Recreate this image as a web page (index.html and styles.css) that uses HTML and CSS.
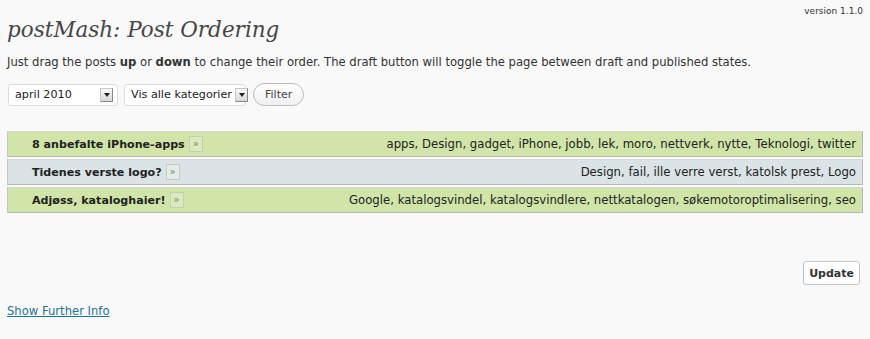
FILE: index.html
```html
<!DOCTYPE html>
<html>
<head>
    <link rel="stylesheet" href="styles.css">
</head>
<body>
    <div class="wrap">
        <div class="version">version 1.1.0</div>
        <h2>postMash: Post Ordering</h2>
        <p class="intro">Just drag the posts <strong>up</strong> or <strong>down</strong> to change their order. The draft button will toggle the page between draft and published states.</p>

        <div class="filters">
            <div class="select month">
                <span>april 2010</span>
                <span class="arrow"></span>
            </div>
            <div class="select cats">
                <span>Vis alle kategorier</span>
                <span class="arrow"></span>
            </div>
            <button class="filter-btn">Filter</button>
        </div>

        <ul class="posts">
            <li class="post green">
                <span class="title">8 anbefalte iPhone-apps</span>
                <span class="more">&raquo;</span>
                <span class="tags">apps, Design, gadget, iPhone, jobb, lek, moro, nettverk, nytte, Teknologi, twitter</span>
            </li>
            <li class="post blue">
                <span class="title">Tidenes verste logo?</span>
                <span class="more">&raquo;</span>
                <span class="tags">Design, fail, ille verre verst, katolsk prest, Logo</span>
            </li>
            <li class="post green">
                <span class="title">Adjøss, kataloghaier!</span>
                <span class="more">&raquo;</span>
                <span class="tags">Google, katalogsvindel, katalogsvindlere, nettkatalogen, søkemotoroptimalisering, seo</span>
            </li>
        </ul>

        <div class="actions">
            <button class="update-btn">Update</button>
        </div>

        <a href="#" class="further">Show Further Info</a>
    </div>
</body>
</html>
```

FILE: styles.css
```css
* {
    margin: 0;
    padding: 0;
    box-sizing: border-box;
}

body {
    background: #f9f9f9;
    font-family: 'DejaVu Sans', 'Liberation Sans', sans-serif;
    font-size: 11.6px;
    color: #333;
}

.wrap {
    position: relative;
    padding: 0 7px;
}

.version {
    position: absolute;
    top: 6px;
    right: 7px;
    font-size: 9px;
    color: #333;
}

h2 {
    font-family: 'DejaVu Serif', Georgia, serif;
    font-style: italic;
    font-weight: normal;
    font-size: 21.5px;
    color: #464646;
    padding-top: 15px;
    line-height: 30px;
}

.intro {
    margin-top: 9px;
    line-height: 17px;
}

.intro strong {
    font-weight: bold;
}

.filters {
    display: flex;
    align-items: center;
    gap: 6px;
    margin-top: 12px;
    padding-left: 1px;
}

.select {
    display: flex;
    align-items: center;
    justify-content: space-between;
    gap: 3px;
    height: 22px;
    background: #fff;
    border: 1px solid #dcdcdc;
    border-radius: 3px;
    padding: 0 4px 0 6px;
    font-size: 11.2px;
    color: #222;
    white-space: nowrap;
}

.month {
    width: 110px;
}

.cats {
    width: 122px;
}

.arrow {
    flex: none;
    width: 13px;
    height: 14px;
    background: linear-gradient(#fafafa, #d8d8d8);
    border: 1px solid #c8c8c8;
    border-right-color: #888;
    border-bottom-color: #888;
    position: relative;
}

.arrow::after {
    content: "";
    position: absolute;
    left: 3px;
    top: 4px;
    border-left: 3px solid transparent;
    border-right: 3px solid transparent;
    border-top: 4px solid #222;
}

.filter-btn {
    font-family: inherit;
    font-size: 11px;
    color: #464646;
    height: 23px;
    padding: 0 11px;
    margin-left: 1px;
    background: linear-gradient(#fff, #f0f0f0);
    border: 1px solid #bbb;
    border-radius: 12px;
}

.posts {
    list-style: none;
    margin-top: 25px;
    display: flex;
    flex-direction: column;
    gap: 2px;
}

.post {
    display: flex;
    align-items: center;
    height: 26px;
    padding: 0 6px 0 24px;
    border: 1px solid #b6b6b6;
    border-top-color: #d6d6d6;
    border-left-color: #c6c6c6;
}

.green {
    background: #d1e5a9;
}

.blue {
    background: #dae4e6;
}

.title {
    font-weight: bold;
    font-size: 11.1px;
    color: #222;
}

.more {
    margin-left: 4px;
    width: 14px;
    height: 16px;
    line-height: 14px;
    text-align: center;
    font-size: 10px;
    color: #7c8a60;
    background: rgba(255, 255, 255, 0.25);
    border: 1px solid #c3cfb3;
}

.tags {
    margin-left: auto;
    color: #222;
    font-size: 11.7px;
}

.actions {
    display: flex;
    justify-content: flex-end;
    margin-top: 48px;
    padding-right: 3px;
}

.update-btn {
    font-family: inherit;
    font-weight: bold;
    font-size: 11px;
    color: #333;
    height: 24px;
    padding: 0 5px;
    background: #fff;
    border: 1px solid #c4c4c4;
    border-radius: 3px;
}

.further {
    display: inline-block;
    margin-top: 19px;
    color: #21759b;
}
```
